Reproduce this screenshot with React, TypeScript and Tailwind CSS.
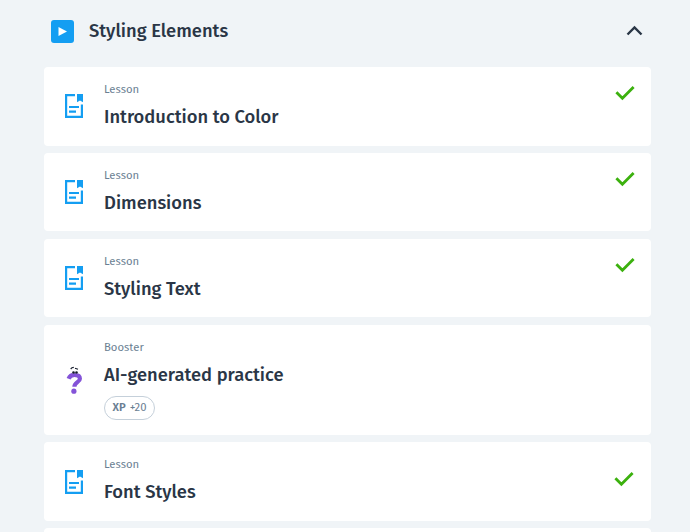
import React from "react";

type Item = {
  kind: string;
  title: string;
  height: string;
  gap: string;
  iconTop: string;
  done?: boolean;
  centered?: boolean;
  xp?: number;
};

const items: Item[] = [
  { kind: "Lesson", title: "Introduction to Color", height: "h-[79px]", gap: "mb-[7px]", iconTop: "pt-[26px]", done: true },
  { kind: "Lesson", title: "Dimensions", height: "h-[78px]", gap: "mb-2", iconTop: "pt-[26px]", done: true },
  { kind: "Lesson", title: "Styling Text", height: "h-[78px]", gap: "mb-2", iconTop: "pt-[26px]", done: true },
  { kind: "Booster", title: "AI-generated practice", height: "h-[110px]", gap: "mb-[7px]", iconTop: "pt-10", xp: 20 },
  { kind: "Lesson", title: "Font Styles", height: "h-[79px]", gap: "mb-[7px]", iconTop: "pt-[27px]", done: true, centered: true },
];

function LessonIcon() {
  return (
    <svg width="20" height="26" viewBox="0 0 20 26" fill="#149ef2">
      <path d="M1 1h10v2.200H3.200v19.600h13.600V11.500H19V25H1z" />
      <path d="M13 1h6v8.300l-3-1.800-3 1.800z" />
      <path d="M5 12.900h10v2.200H5zM5 17.500h7v2.200H5z" />
    </svg>
  );
}

function BoosterIcon() {
  return (
    <svg width="20" height="30" viewBox="0 0 20 30" fill="none">
      <path d="M4.600 13.700C5.600 10.900 7.600 9.800 10.400 9.800c3.400 0 5.500 1.300 5.500 3.900 0 3.600-5.500 3.400-5.500 8" stroke="#8453d8" strokeWidth="4.200" />
      <circle cx="9.900" cy="26.200" r="2.600" fill="#8453d8" />
      <ellipse cx="9.200" cy="6.800" rx="2.100" ry="1.700" fill="#fff" />
      <ellipse cx="12.600" cy="6.800" rx="2.100" ry="1.700" fill="#fff" />
      <path d="M6.700 4l1.300-1.300 1.800-.3M11 3.300l3 .900" stroke="#151b2b" strokeWidth="1.200" />
      <circle cx="9.500" cy="7.500" r="1.300" fill="#151b2b" />
      <circle cx="12.500" cy="7.500" r="1.300" fill="#151b2b" />
    </svg>
  );
}

function Check() {
  return (
    <svg width="20" height="16" viewBox="0 0 20 16" fill="none" stroke="#3cb10e" strokeWidth="2.800">
      <path d="M1.400 7.300l6 6L18.600 2" />
    </svg>
  );
}

function Card({ item }: { item: Item }) {
  return (
    <div className={`flex w-[607px] shrink-0 items-center rounded bg-white ${item.height} ${item.gap}`}>
      <div className={`flex h-full w-[60px] shrink-0 items-start justify-center ${item.iconTop}`}>{item.xp ? <BoosterIcon /> : <LessonIcon />}</div>
      <div className="flex h-full flex-1 flex-col pt-[14px]">
        <div className="h-4 text-[11.300px] leading-4 text-[#6b7f93]">{item.kind}</div>
        <div className="mt-2 h-6 text-[18.350px] leading-6 font-medium whitespace-nowrap text-[#2a3646]">{item.title}</div>
        {item.xp && (
          <div className="mt-[9px] flex h-6 w-[51px] items-center justify-center gap-1 rounded-full border border-[#c5d0da] pb-[2px] text-[11.300px] text-[#6b7f93]">
            <span className="font-semibold">XP</span>
            <span>+{item.xp}</span>
          </div>
        )}
      </div>
      {item.done && (
        <div className={item.centered ? "mr-[17px] mb-[5px]" : "mr-4 mt-[18px] self-start"}>
          <Check />
        </div>
      )}
    </div>
  );
}

export default function App() {
  return (
    <main className="flex h-[532px] w-[690px] flex-col overflow-hidden bg-[#f0f4f7] pl-11 font-['Fira_Sans','Noto_Sans',sans-serif]">
      <header className="flex h-[67px] w-[607px] shrink-0 items-start pt-5 pl-[7px]">
        <div className="flex size-[23px] items-center justify-center rounded-[3px] bg-[#149ef2]">
          <svg width="23" height="23" viewBox="0 0 23 23" fill="#fff">
            <path d="M7.500 7l8.500 4.500L7.500 16z" />
          </svg>
        </div>
        <h2 className="-mt-[1px] ml-[15px] text-[18.400px] leading-6 font-medium text-[#2a3646]">Styling Elements</h2>
        <svg className="mt-[5px] mr-2 ml-auto" width="17" height="12" viewBox="0 0 17 12" fill="none" stroke="#2a3646" strokeWidth="2.400">
          <path d="M1.500 9.500l7-7 7 7" />
        </svg>
      </header>
      {items.map((item) => (
        <Card key={item.title} item={item} />
      ))}
      <div className="h-10 w-[607px] shrink-0 rounded bg-white" />
    </main>
  );
}
